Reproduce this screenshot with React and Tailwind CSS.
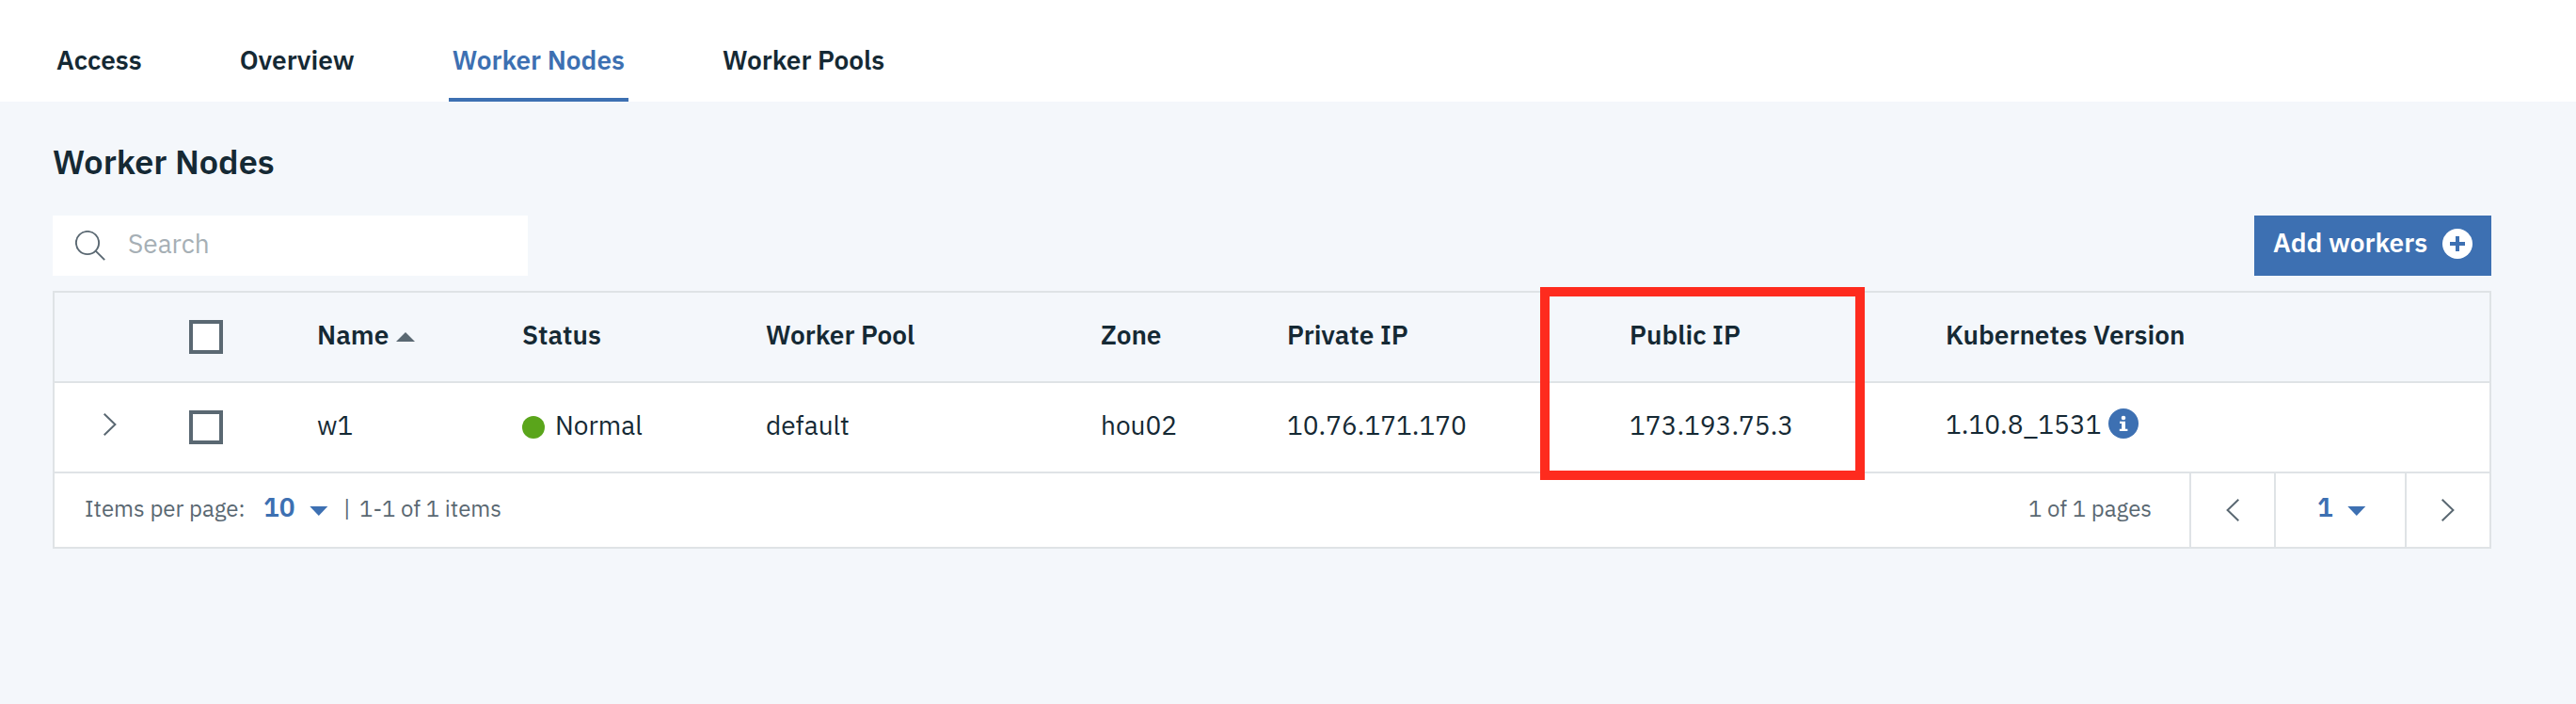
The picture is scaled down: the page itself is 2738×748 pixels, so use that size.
import React from "react";

const tabs = ["Access", "Overview", "Worker Nodes", "Worker Pools"];
const grid =
  "grid h-24 border-b-2 border-[#dfe3e6] grid-cols-[143px_136px_218px_259px_356px_198px_364px_336px_1fr] items-center";

function Text({ children, className = "pb-[5px]" }) {
  return <div className={`text-[28px] leading-[37px] whitespace-nowrap ${className}`}>{children}</div>;
}

function Checkbox() {
  return <div className="size-9 border-4 border-[#5a6872] bg-white" />;
}

function Chevron({ left = false, className = "" }) {
  return (
    <svg width="16" height="24" viewBox="0 0 16 24" fill="none" stroke="#5a6872" strokeWidth="2" className={className}>
      <path d={left ? "M14.3 0.8L2.6 12L14.3 23.2" : "M1.7 0.8L13.4 12L1.7 23.2"} />
    </svg>
  );
}

function Caret({ className = "" }) {
  return (
    <svg width="20" height="10" viewBox="0 0 20 10" fill="#3d70b2" className={className}>
      <path d="M0.3 0H19.3L9.8 10Z" />
    </svg>
  );
}

export default function App() {
  return (
    <div className="h-[748px] w-[2738px] overflow-hidden bg-[#f4f7fb] font-['IBM_Plex_Sans','Roboto',sans-serif] text-[#152934]">
      <nav className="flex h-[108px] gap-24 bg-white pl-14">
        {tabs.map((tab) => (
          <div
            key={tab}
            className={`border-b-4 px-1 pt-[45px] text-[28px] leading-[37px] font-semibold ${
              tab === "Worker Nodes" ? "border-[#3d70b2] text-[#3d70b2]" : "border-transparent"
            }`}
          >
            {tab}
          </div>
        ))}
      </nav>

      <main className="w-[2648px] pt-10 pl-14">
        <h1 className="text-[36px] leading-[47px] font-semibold">Worker Nodes</h1>

        <div className="mt-[34px] flex justify-between">
          <div className="flex h-16 w-[505px] items-center bg-white pl-6">
            <svg width="32" height="32" viewBox="0 0 32 32" fill="none" stroke="#5a6872" strokeWidth="1.9">
              <circle cx="13" cy="13" r="12.1" />
              <path d="M21.4 21.4L31.2 31.2" />
            </svg>
            <Text className="pb-[5px] pl-6 text-[#a6afb5]">Search</Text>
          </div>
          <button className="flex h-16 w-[252px] items-center justify-between bg-[#3d70b2] px-5 text-white">
            <Text className="pb-[7px] font-semibold">Add workers</Text>
            <svg width="32" height="32" viewBox="0 0 32 32" className="mb-1">
              <circle cx="16" cy="16" r="16" fill="#fff" />
              <path d="M16 8V24M8 16H24" stroke="#3d70b2" strokeWidth="4" />
            </svg>
          </button>
        </div>

        <section className="relative mt-4 border-2 border-[#dfe3e6] bg-white">
          <div className={`${grid} bg-[#f4f7fb] font-semibold`}>
            <div />
            <Checkbox />
            <div className="flex items-center">
              <Text>Name</Text>
              <svg width="20" height="10" viewBox="0 0 20 10" fill="#5a6872" className="ml-[8px]">
                <path d="M0 10H20L10 0Z" />
              </svg>
            </div>
            <Text>Status</Text>
            <Text>Worker Pool</Text>
            <Text>Zone</Text>
            <Text>Private IP</Text>
            <Text>Public IP</Text>
            <Text>Kubernetes Version</Text>
          </div>

          <div className={grid}>
            <Chevron className="mb-[7px] ml-[51px]" />
            <Checkbox />
            <Text>w1</Text>
            <div className="flex items-center gap-[11px]">
              <div className="size-6 rounded-full bg-[#5aa51b]" />
              <Text>Normal</Text>
            </div>
            <Text>default</Text>
            <Text>hou02</Text>
            <Text>10.76.171.170</Text>
            <Text>173.193.75.3</Text>
            <div className="flex items-center">
              <Text className="pb-[7px]">1.10.8_1531</Text>
              <svg width="32" height="32" viewBox="0 0 32 32" className="mb-2 ml-2">
                <circle cx="16" cy="16" r="16" fill="#3d70b2" />
                <circle cx="16" cy="10" r="2.3" fill="#fff" />
                <path d="M12 13.7H18V21.8H20.4V24H11.8V21.8H14.1V15.9H12Z" fill="#fff" />
              </svg>
            </div>
          </div>

          <div className="flex h-[78px] items-stretch justify-between text-[24px] leading-8 text-[#5a6872]">
            <div className="flex items-center pl-8">
              <div className="w-[190px] pb-1 whitespace-nowrap">Items per page:</div>
              <Text className="w-[49px] pb-[7px] font-semibold text-[#3d70b2]">10</Text>
              <Caret className="mt-px" />
              <div className="w-[33px] pb-1 pl-4">|</div>
              <div className="pb-1">1-1 of 1 items</div>
            </div>
            <div className="flex divide-x-2 divide-[#dfe3e6]">
              <div className="flex items-center pr-10 pb-1">1 of 1 pages</div>
              <div className="flex w-[90px] items-center justify-center">
                <Chevron left />
              </div>
              <div className="flex w-[139px] items-center pl-[44px]">
                <Text className="w-8 pb-[7px] font-semibold text-[#3d70b2]">1</Text>
                <Caret className="mt-px" />
              </div>
              <div className="flex w-[88px] items-center justify-center">
                <Chevron />
              </div>
            </div>
          </div>

          <div className="pointer-events-none absolute -top-[6px] left-[1579px] h-[205px] w-[345px] border-[10px] border-[#fe2b1e]" />
        </section>
      </main>
    </div>
  );
}
